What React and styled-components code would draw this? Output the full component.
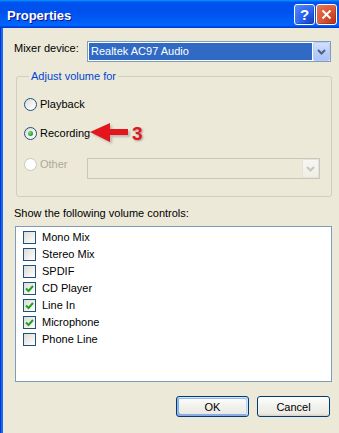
import React from "react";
import styled, { createGlobalStyle } from "styled-components";

const Global = createGlobalStyle`
  html, body { margin: 0; padding: 0; }
  body {
    background: #ece9d8;
    overflow: hidden;
    font-family: "Liberation Sans", Arial, sans-serif;
    font-size: 11px;
  }
`;

const Window = styled.div`
  position: relative;
  width: 339px;
  height: 433px;
  display: flex;
  flex-direction: column;
  overflow: hidden;
`;

const TitleBar = styled.div`
  height: 28px;
  box-sizing: border-box;
  flex: none;
  display: flex;
  align-items: flex-start;
  justify-content: space-between;
  padding: 4px 2px 0 7px;
  background: linear-gradient(
    180deg,
    #0997ff 0,
    #0053ee 8%,
    #0050ee 40%,
    #0060f8 80%,
    #0066ff 88%,
    #005bff 93%,
    #003dd7 96%,
    #003dd7 100%
  );
`;

const Title = styled.div`
  margin-top: 4px;
  color: #fff;
  font-weight: bold;
  font-size: 13px;
  line-height: 15px;
  text-shadow: 1px 1px #0f1089;
`;

const Caption = styled.div`
  display: flex;
  gap: 1px;
`;

const CapButton = styled.div`
  width: 21px;
  height: 21px;
  box-sizing: border-box;
  border: 1px solid #fff;
  border-radius: 3px;
  display: flex;
  align-items: center;
  justify-content: center;
  color: #fff;
  font-weight: bold;
  font-size: 15px;
  background: ${(p) =>
    p.$close
      ? "radial-gradient(circle at 85% 85%, #c0381a 0, #d9532f 45%, #e87a5e 100%)"
      : "radial-gradient(circle at 85% 85%, #1a43c8 0, #2a63ef 45%, #5a8cf8 100%)"};
  box-shadow: inset -1px -1px rgba(0, 0, 0, 0.2);
`;

const Body = styled.div`
  flex: 1;
  background: #ece9d8;
  border-left: 1px solid #0831d9;
  box-shadow: inset 2px 0 #166aee;
  display: flex;
  flex-direction: column;
`;

const MixerRow = styled.div`
  display: flex;
  align-items: flex-start;
  margin: 13px 0 0 13px;
`;

const Label = styled.div`
  width: ${(p) => p.$w || "auto"};
  margin-top: ${(p) => p.$mt || "0"};
  margin-left: ${(p) => p.$ml || "0"};
  line-height: 13px;
  color: ${(p) => (p.$disabled ? "#aca899" : "#000")};
  white-space: nowrap;
  flex: none;
`;

const Combo = styled.div`
  width: ${(p) => p.$w}px;
  height: 21px;
  box-sizing: border-box;
  border: 1px solid ${(p) => (p.$disabled ? "#c9c7ba" : "#7f9db9")};
  background: ${(p) => (p.$disabled ? "#ece9d8" : "#fff")};
  display: flex;
  flex: none;
`;

const ComboValue = styled.div`
  flex: 1;
  margin: 1px 1px 1px 1px;
  padding-left: 2px;
  background: ${(p) => (p.$selected ? "#316ac5" : "transparent")};
  color: #fff;
  line-height: 17px;
`;

const DropButton = styled.div`
  width: 17px;
  height: 19px;
  box-sizing: border-box;
  border: 1px solid ${(p) => (p.$disabled ? "#e5e3da" : "#b8cbf7")};
  border-radius: 2px;
  display: flex;
  align-items: center;
  justify-content: center;
  background: ${(p) =>
    p.$disabled
      ? "linear-gradient(180deg, #f7f6f2, #eeede6)"
      : "linear-gradient(180deg, #d4e0fd, #b6cbf8 60%, #adc3f6)"};
`;

const Chevron = ({ color }) => (
  <svg width="9" height="6" viewBox="0 0 9 6">
    <path d="M1 1 L4.5 4.5 L8 1" fill="none" stroke={color} strokeWidth="2" />
  </svg>
);

const Group = styled.fieldset`
  margin: 8px 0 0 15px;
  padding: 0 0 17px 7px;
  width: 316px;
  box-sizing: border-box;
  border: 1px solid #d0d0bf;
  border-radius: 3px;
  min-width: 0;
`;

const Legend = styled.legend`
  margin-left: 5px;
  padding: 0 2px;
  color: #0046d5;
  line-height: 13px;
`;

const RadioRow = styled.div`
  display: flex;
  align-items: flex-start;
  margin-top: ${(p) => p.$mt}px;
`;

const Radio = styled.div`
  width: 13px;
  height: 13px;
  box-sizing: border-box;
  border-radius: 50%;
  border: 1px solid ${(p) => (p.$disabled ? "#cac8bb" : "#1c5180")};
  background: ${(p) =>
    p.$disabled
      ? "#fff"
      : "linear-gradient(135deg, #dcdcd7 0, #f5f4f0 60%, #fff 100%)"};
  display: flex;
  align-items: center;
  justify-content: center;
  flex: none;
`;

const Dot = styled.div`
  width: 5px;
  height: 5px;
  border-radius: 50%;
  background: radial-gradient(circle at 35% 35%, #7be07b 0, #21a121 70%);
`;

const ShowLabel = styled.div`
  margin: 10px 0 0 13px;
  line-height: 13px;
`;

const ListBox = styled.div`
  margin: 6px 0 0 14px;
  width: 317px;
  height: 156px;
  box-sizing: border-box;
  border: 1px solid #7f9db9;
  background: #fff;
  padding: 4px 0 0 7px;
`;

const Item = styled.div`
  display: flex;
  align-items: flex-start;
  height: 17px;
`;

const Check = styled.div`
  width: 13px;
  height: 13px;
  box-sizing: border-box;
  border: 1px solid #1c5180;
  background: linear-gradient(135deg, #dcdcd7 0, #f0efea 55%, #fff 100%);
  display: flex;
  align-items: center;
  justify-content: center;
  flex: none;
`;

const ButtonRow = styled.div`
  display: flex;
  justify-content: flex-end;
  gap: 8px;
  margin-top: 14px;
  padding-right: 9px;
`;

const Button = styled.div`
  width: 73px;
  height: 21px;
  box-sizing: border-box;
  border: 1px solid #003c74;
  border-radius: 3px;
  display: flex;
  align-items: center;
  justify-content: center;
  background: linear-gradient(180deg, #fff 0, #f3f3ef 40%, #ecebe6 86%, #d6d0c5 100%);
  box-shadow: ${(p) =>
    p.$default
      ? "inset -1px 1px #cee7ff, inset 1px 2px #98b8ea, inset -2px 2px #bcd4f6, inset 1px -1px #89ade4, inset 2px -2px #89ade4"
      : "none"};
  color: #000;
`;

const Arrow = styled.svg`
  position: absolute;
  left: 86px;
  top: 118px;
`;

const Callout = styled.div`
  position: absolute;
  left: 132px;
  top: 124px;
  color: #e3161e;
  font-weight: bold;
  font-size: 19px;
  line-height: 19px;
  text-shadow: 1px 1px 2px rgba(80, 80, 80, 0.5);
`;

const items = [
  ["Mono Mix", false],
  ["Stereo Mix", false],
  ["SPDIF", false],
  ["CD Player", true],
  ["Line In", true],
  ["Microphone", true],
  ["Phone Line", false],
];

export default function App() {
  return (
    <>
      <Global />
      <Window>
        <TitleBar>
          <Title>Properties</Title>
          <Caption>
            <CapButton>?</CapButton>
            <CapButton $close>
              <svg width="11" height="11" viewBox="0 0 11 11">
                <path d="M1.5 1.5 L9.5 9.5 M9.5 1.5 L1.5 9.5" stroke="#fff" strokeWidth="2" />
              </svg>
            </CapButton>
          </Caption>
        </TitleBar>
        <Body>
          <MixerRow>
            <Label $w="73px" $mt="1px">Mixer device:</Label>
            <Combo $w={244}>
              <ComboValue $selected>Realtek AC97 Audio</ComboValue>
              <DropButton>
                <Chevron color="#4d6185" />
              </DropButton>
            </Combo>
          </MixerRow>

          <Group>
            <Legend>Adjust volume for</Legend>
            <RadioRow $mt={15}>
              <Radio />
              <Label $ml="3px">Playback</Label>
            </RadioRow>
            <RadioRow $mt={16}>
              <Radio>
                <Dot />
              </Radio>
              <Label $ml="3px">Recording</Label>
            </RadioRow>
            <RadioRow $mt={18}>
              <Radio $disabled />
              <Label $ml="3px" $w="47px" $disabled>Other</Label>
              <Combo $w={233} $disabled>
                <ComboValue />
                <DropButton $disabled>
                  <Chevron color="#c9c7ba" />
                </DropButton>
              </Combo>
            </RadioRow>
          </Group>

          <ShowLabel>Show the following volume controls:</ShowLabel>
          <ListBox>
            {items.map(([name, checked]) => (
              <Item key={name}>
                <Check>
                  {checked && (
                    <svg width="9" height="9" viewBox="0 0 9 9">
                      <path d="M1 4.5 L3.5 7 L8 2" fill="none" stroke="#21a121" strokeWidth="2" />
                    </svg>
                  )}
                </Check>
                <Label $ml="6px">{name}</Label>
              </Item>
            ))}
          </ListBox>

          <ButtonRow>
            <Button $default>OK</Button>
            <Button>Cancel</Button>
          </ButtonRow>
        </Body>

        <Arrow width="46" height="30" viewBox="0 0 46 30">
          <defs>
            <filter id="sh" x="-20%" y="-20%" width="140%" height="140%">
              <feGaussianBlur stdDeviation="1" />
            </filter>
          </defs>
          <polygon
            points="6,16 26,7 26,13 44,13 44,19 26,19 26,26"
            fill="#888"
            opacity="0.5"
            filter="url(#sh)"
          />
          <polygon points="4,14 24,5 24,11 42,11 42,17 24,17 24,24" fill="#e3161e" />
        </Arrow>
        <Callout>3</Callout>
      </Window>
    </>
  );
}
